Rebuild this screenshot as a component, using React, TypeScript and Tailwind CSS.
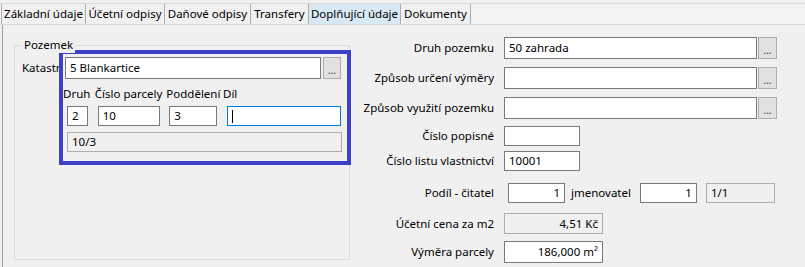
import React from 'react';

const tabs = [
  { label: 'Základní údaje', w: 'w-[84px]' },
  { label: 'Účetní odpisy', w: 'w-[79px]' },
  { label: 'Daňové odpisy', w: 'w-[86px]' },
  { label: 'Transfery', w: 'w-[58px]' },
  { label: 'Doplňující údaje', w: 'w-[92px]', active: true },
  { label: 'Dokumenty', w: 'w-[70px]' },
];

const Box: React.FC<{ className?: string; value?: string; readOnly?: boolean; right?: boolean }> = ({
  className = '',
  value = '',
  readOnly,
  right,
}) => (
  <div
    className={`flex items-center border px-[4px] whitespace-nowrap overflow-hidden ${
      readOnly ? 'bg-[#f0f0f0] border-[#adadad]' : 'bg-white border-[#7a7a7a]'
    } ${right ? 'justify-end' : ''} ${className}`}
  >
    {value}
  </div>
);

const DotsButton: React.FC<{ className?: string }> = ({ className = '' }) => (
  <div
    className={`flex items-end justify-center pb-[3px] border border-[#adadad] bg-[#e1e1e1] text-[10px] leading-none text-[#333] ${className}`}
  >
    ...
  </div>
);

const Label: React.FC<{ children: React.ReactNode }> = ({ children }) => (
  <div className="w-[135px] text-right whitespace-nowrap pr-[1px]">{children}</div>
);

export default function App() {
  return (
    <div
      className="w-[805px] h-[267px] overflow-hidden bg-[#f0f0f0] text-[11.5px] leading-[16px] text-black pt-[3px]"
      style={{ fontFamily: '"Noto Sans", "Open Sans", sans-serif' }}
    >
      {/* tab strip */}
      <div className="flex h-[22px] border-y border-[#d9d9d9] bg-[#f3f3f3] pl-[1px]">
        {tabs.map((t) => (
          <div
            key={t.label}
            className={`${t.w} flex items-center justify-center border-l border-[#acacac] whitespace-nowrap ${
              t.active ? 'bg-[#d9e8f5]' : 'bg-[#f0f0f0]'
            }`}
          >
            {t.label}
          </div>
        ))}
        <div className="border-l border-[#acacac]" />
      </div>

      {/* panel */}
      <div className="ml-[2px] border-l border-[#a0a0a0] h-[242px] flex">
        {/* group box */}
        <div className="relative mt-[20px] ml-[11px] w-[336px] h-[215px] border border-[#dcdcdc] shrink-0">
          <span className="absolute -top-[9px] left-[7px] px-[2px] bg-[#f0f0f0]">Pozemek</span>
          <div className="flex items-start pt-[4px]">
            <div className="ml-[7px] mt-[10px] w-[37px] whitespace-nowrap">Katastr</div>
            <div className="w-[292px] -mr-[3px] border-[4px] border-[#3c40c4] pt-[3px] pb-[9px] pr-[6px]">
              <div className="flex gap-[2px] pl-[2px]">
                <Box className="w-[256px] h-[22px]" value="5 Blankartice" />
                <DotsButton className="w-[18px] h-[22px]" />
              </div>
              <div className="flex mt-[7px]">
                <div className="w-[32px] flex flex-col">
                  <span>Druh</span>
                  <Box className="ml-[4px] mt-[4px] w-[21px] h-[20px]" value="2" />
                </div>
                <div className="w-[72px] flex flex-col">
                  <span>Číslo parcely</span>
                  <Box className="ml-[3px] mt-[4px] w-[62px] h-[20px]" value="10" />
                </div>
                <div className="w-[57px] flex flex-col">
                  <span>Poddělení</span>
                  <Box className="ml-[3px] mt-[4px] w-[48px] h-[20px]" value="3" />
                </div>
                <div className="flex flex-col">
                  <span>Díl</span>
                  <div className="ml-[4px] mt-[4px] w-[114px] h-[20px] border border-[#0078d7] bg-white flex items-center pl-[4px]">
                    <span className="w-[1px] h-[13px] bg-black" />
                  </div>
                </div>
              </div>
              <Box readOnly className="ml-[4px] mt-[6px] w-[275px] h-[20px] border-[#7a7a7a]" value="10/3" />
            </div>
          </div>
        </div>

        {/* right column */}
        <div className="ml-[10px] mt-[12px] flex flex-col">
          <div className="flex items-center gap-[9px]">
            <Label>Druh pozemku</Label>
            <Box className="w-[253px] h-[22px]" value="50 zahrada" />
            <DotsButton className="-ml-[8px] w-[19px] h-[22px]" />
          </div>
          <div className="flex items-center gap-[9px] mt-[8px]">
            <Label>Způsob určení výměry</Label>
            <Box className="w-[253px] h-[22px]" />
            <DotsButton className="-ml-[8px] w-[19px] h-[22px]" />
          </div>
          <div className="flex items-center gap-[9px] mt-[8px]">
            <Label>Způsob využití pozemku</Label>
            <Box className="w-[253px] h-[22px]" />
            <DotsButton className="-ml-[8px] w-[19px] h-[22px]" />
          </div>
          <div className="flex items-center gap-[9px] mt-[7px]">
            <Label>Číslo popisné</Label>
            <Box className="w-[76px] h-[20px]" />
          </div>
          <div className="flex items-center gap-[9px] mt-[5px]">
            <Label>Číslo listu vlastnictví</Label>
            <Box className="w-[76px] h-[20px]" value="10001" />
          </div>
          <div className="flex items-center gap-[9px] mt-[12px]">
            <Label>Podíl - čitatel</Label>
            <Box className="ml-[4px] w-[57px] h-[20px]" right value="1" />
            <span className="-ml-[3px]">jmenovatel</span>
            <Box className="w-[57px] h-[20px]" right value="1" />
            <Box readOnly className="w-[69px] h-[20px] border-[#7a7a7a]" value="1/1" />
          </div>
          <div className="flex items-center gap-[9px] mt-[10px]">
            <Label>Účetní cena za m2</Label>
            <Box readOnly right className="w-[99px] h-[21px] border-[#7a7a7a]" value="4,51 Kč" />
          </div>
          <div className="flex items-center gap-[9px] mt-[7px]">
            <Label>Výměra parcely</Label>
            <Box right className="w-[99px] h-[22px]" value="186,000 m²" />
          </div>
        </div>
      </div>
    </div>
  );
}
